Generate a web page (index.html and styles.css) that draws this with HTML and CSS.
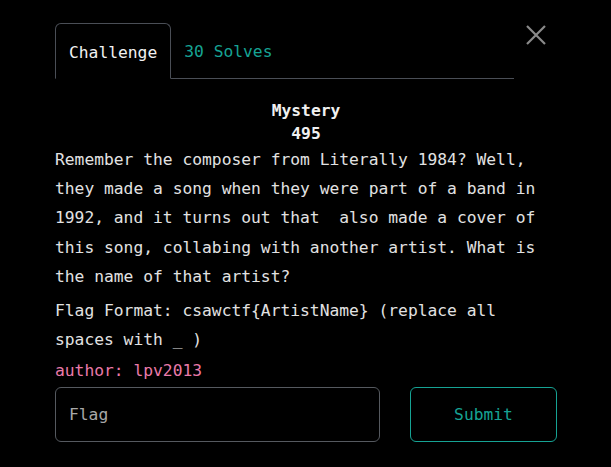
FILE: index.html
```html
<!DOCTYPE html>
<html lang="en">
<head>
<meta charset="utf-8">
<title>Challenge</title>
<link rel="stylesheet" href="styles.css">
</head>
<body>
<div class="modal">
  <div class="modal-header">
    <nav class="tabs">
      <span class="tab tab-active">Challenge</span>
      <span class="tab tab-link">30 Solves</span>
    </nav>
    <button class="close" aria-label="Close">
      <svg width="20" height="20" viewBox="0 0 20 20"><path d="M1 1 L19 19 M19 1 L1 19" stroke="#8a8a8a" stroke-width="2.2" fill="none"/></svg>
    </button>
  </div>
  <div class="content">
    <h2 class="title">Mystery</h2>
    <div class="points">495</div>
    <p class="desc">Remember the composer from Literally 1984? Well, they made a song when they were part of a band in 1992, and it turns out that&nbsp; also made a cover of this song, collabing with another artist. What is the name of that artist?</p>
    <p class="desc flagfmt">Flag Format: csawctf{ArtistName} (replace all spaces with _ )</p>
    <div class="author">author: lpv2013</div>
    <form class="submit-row">
      <input class="flag-input" type="text" placeholder="Flag">
      <button class="submit" type="button">Submit</button>
    </form>
  </div>
</div>
</body>
</html>
```
FILE: styles.css
```css
html, body {
  margin: 0;
  padding: 0;
  background: #000;
}
body {
  font-family: "DejaVu Sans Mono", "Liberation Mono", monospace;
  font-size: 16.3px;
  color: #e6e6e6;
}
.modal {
  width: 502px;
  margin-left: 55px;
  padding-top: 23px;
}
.modal-header {
  display: flex;
  align-items: flex-start;
}
.tabs {
  flex: 1;
  display: flex;
  border-bottom: 1px solid #4a4e56;
  height: 55px;
}
.tab {
  display: flex;
  align-items: center;
  padding: 0 13px;
  height: 55px;
  box-sizing: border-box;
}
.tab-active {
  border: 1px solid #4a4e56;
  border-bottom: 1px solid #000;
  border-radius: 6px 6px 0 0;
  height: 56px;
  padding-top: 2px;
  color: #f2f2f2;
}
.tab-link {
  padding-top: 2px;
  color: #16a394;
}
.close {
  width: 43px;
  height: 24px;
  padding: 2px 0 0 0;
  margin: 0;
  border: 0;
  background: transparent;
  display: flex;
  justify-content: center;
  align-items: flex-start;
}
.content {
  padding-top: 20px;
}
.title {
  margin: 0;
  font-size: 16.3px;
  font-weight: 600;
  text-align: center;
  line-height: 23px;
  color: #f0f0f0;
}
.points {
  text-align: center;
  line-height: 23px;
  font-weight: 600;
  color: #f0f0f0;
}
.desc {
  margin: 0;
  line-height: 29.2px;
  color: #e2e2e2;
}
.flagfmt {
  margin-top: 5px;
}
.author {
  margin-top: 2px;
  line-height: 29px;
  color: #ea7aa9;
}
.submit-row {
  margin: 2px 0 0 0;
  display: flex;
  justify-content: space-between;
}
.flag-input {
  width: 325px;
  height: 55px;
  box-sizing: border-box;
  background: #000;
  border: 1px solid #55595f;
  border-radius: 6px;
  padding: 0 13px;
  font-family: inherit;
  font-size: 16.3px;
  color: #e6e6e6;
}
.flag-input::placeholder {
  color: #a8a8a8;
}
.submit {
  width: 147px;
  height: 55px;
  background: #000;
  border: 1px solid #16a394;
  border-radius: 6px;
  font-family: inherit;
  font-size: 16.3px;
  color: #16a394;
}
```
